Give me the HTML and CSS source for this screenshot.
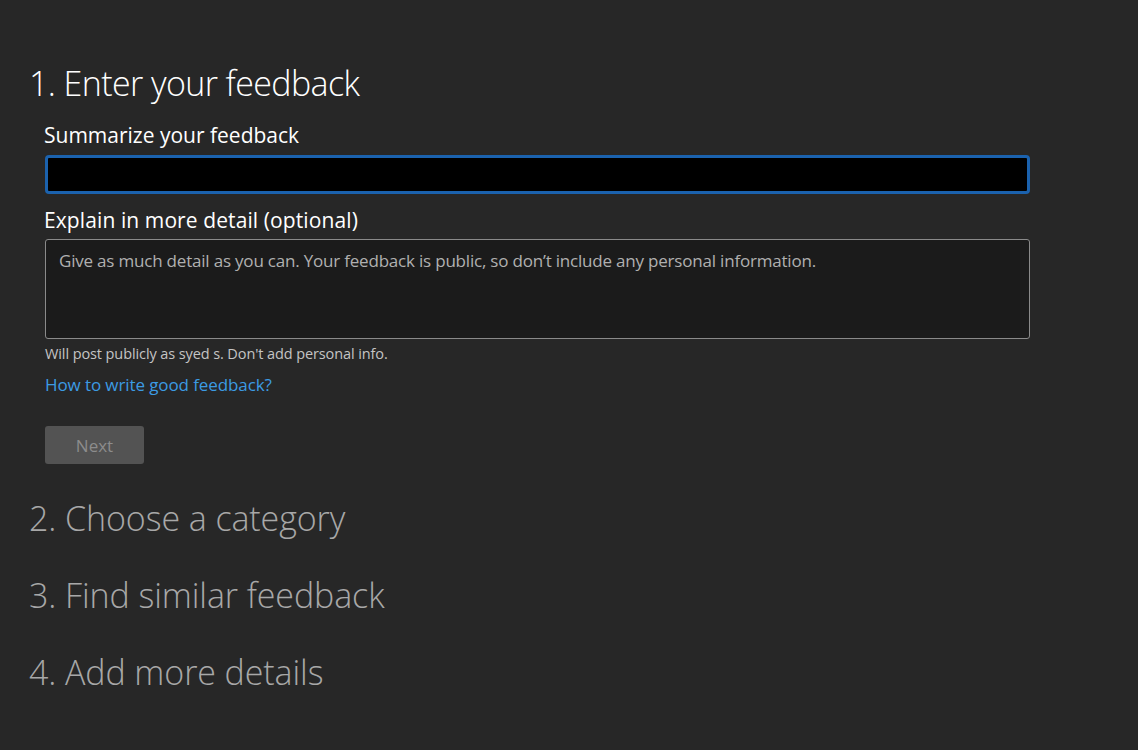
FILE: index.html
```html
<!DOCTYPE html>
<html>
<head>
<meta charset="utf-8">
<link rel="stylesheet" href="styles.css">
</head>
<body>
<main class="page">
  <section class="step active">
    <h1 class="step-title">1. Enter your feedback</h1>
    <div class="form">
      <label class="field-label">Summarize your feedback</label>
      <div class="input"></div>
      <label class="field-label second">Explain in more detail (optional)</label>
      <div class="textarea">Give as much detail as you can. Your feedback is public, so don’t include any personal information.</div>
      <p class="note">Will post publicly as syed s. Don't add personal info.</p>
      <a class="link">How to write good feedback?</a>
      <button class="next">Next</button>
    </div>
  </section>
  <h2 class="step-title muted first">2. Choose a category</h2>
  <h2 class="step-title muted">3. Find similar feedback</h2>
  <h2 class="step-title muted">4. Add more details</h2>
</main>
</body>
</html>
```
FILE: styles.css
```css
html, body {
  margin: 0;
  padding: 0;
  background: #272727;
  font-family: "Open Sans", "Noto Sans", sans-serif;
  color: #ffffff;
}
.page {
  padding: 59px 0 0 29px;
  width: 1000px;
}
.step-title {
  margin: 0;
  font-size: 34px;
  font-weight: 300;
  line-height: 48px;
  color: #ffffff;
  letter-spacing: -0.6px;
}
.step-title.muted {
  color: #a8a8a8;
  margin-top: 29px;
  letter-spacing: -0.1px;
}
.step-title.muted.first {
  margin-top: 30px;
}
.form {
  display: flex;
  flex-direction: column;
  align-items: flex-start;
  padding-left: 15px;
}
.field-label {
  font-size: 21px;
  line-height: 28px;
  margin-top: 14px;
  letter-spacing: 0;
}
.field-label.second {
  margin-top: 12px;
  letter-spacing: 0.1px;
}
.input {
  box-sizing: border-box;
  margin-top: 6px;
  margin-left: 1px;
  width: 985px;
  height: 39px;
  background: #000;
  border: 3px solid #1b62ae;
  border-radius: 4px;
}
.textarea {
  box-sizing: border-box;
  margin-top: 5px;
  margin-left: 1px;
  width: 985px;
  height: 100px;
  background: #1b1b1b;
  border: 1px solid #8a8a8a;
  border-radius: 3px;
  padding: 9px 13px;
  font-size: 17px;
  line-height: 24px;
  color: #b0b0b0;
  letter-spacing: -0.2px;
}
.note {
  margin: 5px 0 0 1px;
  font-size: 14.5px;
  line-height: 20px;
  color: #c4c4c4;
  letter-spacing: -0.1px;
}
.link {
  margin: 9px 0 0 1px;
  font-size: 17px;
  line-height: 24px;
  color: #3c9be3;
  letter-spacing: -0.1px;
}
.next {
  margin: 29px 0 0 1px;
  width: 99px;
  height: 38px;
  border: none;
  border-radius: 3px;
  background: #535353;
  color: #8c8c8c;
  font-family: inherit;
  font-size: 17px;
  padding: 0;
}
```
